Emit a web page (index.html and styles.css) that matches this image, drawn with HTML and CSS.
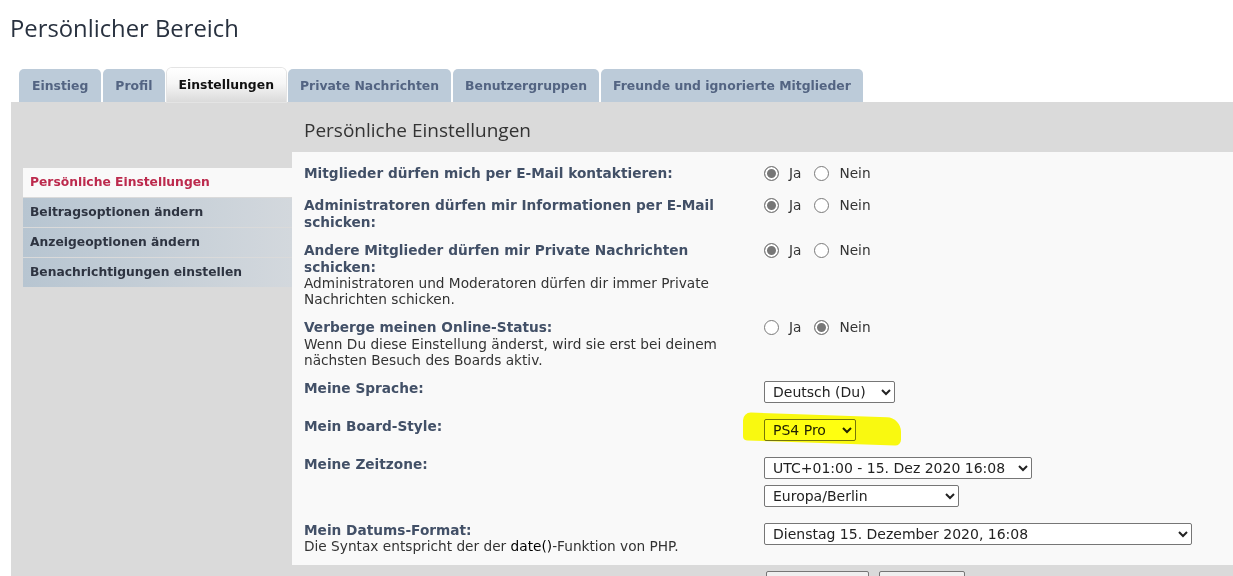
FILE: index.html
```html
<!DOCTYPE html>
<html lang="de">
<head>
    <meta charset="UTF-8">
    <title>Persönlicher Bereich</title>
    <link rel="stylesheet" href="styles.css">
</head>
<body>
    <h1 class="page-title">Persönlicher Bereich</h1>

    <ul class="tabs">
        <li class="tab">Einstieg</li>
        <li class="tab">Profil</li>
        <li class="tab active">Einstellungen</li>
        <li class="tab">Private Nachrichten</li>
        <li class="tab">Benutzergruppen</li>
        <li class="tab">Freunde und ignorierte Mitglieder</li>
    </ul>

    <div class="panel">
        <ul class="sidebar">
            <li class="side-item active">Persönliche Einstellungen</li>
            <li class="side-item">Beitragsoptionen ändern</li>
            <li class="side-item">Anzeigeoptionen ändern</li>
            <li class="side-item">Benachrichtigungen einstellen</li>
        </ul>

        <div class="main">
            <h2 class="main-head">Persönliche Einstellungen</h2>

            <div class="settings">
                <dl class="row">
                    <dt><label>Mitglieder dürfen mich per E-Mail kontaktieren:</label></dt>
                    <dd class="radios">
                        <label><input type="radio" name="email" checked> Ja</label>
                        <label><input type="radio" name="email"> Nein</label>
                    </dd>
                </dl>
                <dl class="row">
                    <dt><label>Administratoren dürfen mir Informationen per E-Mail schicken:</label></dt>
                    <dd class="radios">
                        <label><input type="radio" name="massemail" checked> Ja</label>
                        <label><input type="radio" name="massemail"> Nein</label>
                    </dd>
                </dl>
                <dl class="row">
                    <dt>
                        <label>Andere Mitglieder dürfen mir Private Nachrichten schicken:</label>
                        <span class="explain">Administratoren und Moderatoren dürfen dir immer Private Nachrichten schicken.</span>
                    </dt>
                    <dd class="radios">
                        <label><input type="radio" name="pm" checked> Ja</label>
                        <label><input type="radio" name="pm"> Nein</label>
                    </dd>
                </dl>
                <dl class="row">
                    <dt>
                        <label>Verberge meinen Online-Status:</label>
                        <span class="explain">Wenn Du diese Einstellung änderst, wird sie erst bei deinem nächsten Besuch des Boards aktiv.</span>
                    </dt>
                    <dd class="radios">
                        <label><input type="radio" name="hide"> Ja</label>
                        <label><input type="radio" name="hide" checked> Nein</label>
                    </dd>
                </dl>
                <dl class="row">
                    <dt><label>Meine Sprache:</label></dt>
                    <dd><select class="sel-lang"><option>Deutsch (Du)</option></select></dd>
                </dl>
                <dl class="row">
                    <dt><label>Mein Board-Style:</label></dt>
                    <dd class="marked">
                        <select class="sel-style"><option>PS4 Pro</option></select>
                        <span class="marker"></span>
                    </dd>
                </dl>
                <dl class="row">
                    <dt><label>Meine Zeitzone:</label></dt>
                    <dd class="stack">
                        <select class="sel-tz"><option>UTC+01:00 - 15. Dez 2020 16:08</option></select>
                        <select class="sel-city"><option>Europa/Berlin</option></select>
                    </dd>
                </dl>
                <dl class="row">
                    <dt>
                        <label>Mein Datums-Format:</label>
                        <span class="explain">Die Syntax entspricht der der <code>date()</code>-Funktion von PHP.</span>
                    </dt>
                    <dd><select class="sel-date"><option>Dienstag 15. Dezember 2020, 16:08</option></select></dd>
                </dl>
            </div>

            <div class="submit-row">
                <input type="reset" class="button reset" value="Zurücksetzen">
                <input type="submit" class="button submit" value="Absenden">
            </div>
        </div>
    </div>
</body>
</html>
```

FILE: styles.css
```css
:root {
    --panel: #dadada;
    --content: #f9f9f9;
    --tab: #bccbd9;
    --tab-text: #536482;
    --label: #425067;
    --text: #333;
}
html, body {
    overflow: hidden;
}
body {
    margin: 0;
    font-family: "DejaVu Sans", Verdana, sans-serif;
    font-size: 13.7px;
    color: var(--text);
    background: #fff;
}
ul {
    list-style: none;
    margin: 0;
    padding: 0;
}
.page-title {
    font-family: "Open Sans", "Trebuchet MS", sans-serif;
    font-weight: 400;
    font-size: 23.8px;
    color: #28313f;
    margin: 0;
    padding: 12px 0 0 10px;
    height: 56px;
    box-sizing: border-box;
}
.tabs {
    display: flex;
    align-items: flex-end;
    gap: 2px;
    padding-left: 19px;
    height: 46px;
}
.tab {
    height: 33px;
    line-height: 33px;
    padding: 0 12px;
    font-size: 12.4px;
    background: var(--tab);
    color: var(--tab-text);
    font-weight: bold;
    border-radius: 5px 5px 0 0;
}
.tab:first-child {
    padding: 0 13px;
}
.tab.active {
    height: 34px;
    line-height: 34px;
    background: linear-gradient(#fff 0%, #f6f6f6 45%, #dadada 100%);
    color: #111;
    box-shadow: 0 0 0 1px #e4e4e4;
}
.panel {
    display: flex;
    margin-left: 11px;
    background: var(--panel);
    min-height: 480px;
}
.sidebar {
    width: 269px;
    padding: 66px 0 0 12px;
    flex-shrink: 0;
}
.side-item {
    height: 29px;
    line-height: 29px;
    padding-left: 7px;
    margin-bottom: 1px;
    font-size: 12.3px;
    font-weight: bold;
    color: #2e3441;
    background: linear-gradient(to right, #b7c5d1, #d3d8dd);
}
.side-item.active {
    background: var(--content);
    color: #bc2a4d;
}
.main {
    flex: 1;
}
.main-head {
    font-family: "Open Sans", "Trebuchet MS", sans-serif;
    font-weight: 400;
    font-size: 19px;
    color: #333;
    margin: 0;
    height: 50px;
    line-height: 57px;
    padding-left: 12px;
}
.settings {
    background: var(--content);
    padding: 7px 12px 5px;
}
.row {
    display: flex;
    margin: 0;
    padding: 6px 0;
}
.row dt {
    width: 460px;
    flex-shrink: 0;
    line-height: 16.5px;
    padding-right: 10px;
    box-sizing: border-box;
}
.row dt label {
    font-weight: bold;
    color: var(--label);
}
.explain {
    display: block;
    line-height: 16px;
    color: var(--text);
}
code {
    font-family: inherit;
    color: #000;
}
.row dd {
    margin: 0;
}
.radios {
    display: flex;
    gap: 13px;
    height: 20px;
    align-items: flex-start;
}
.radios label {
    display: flex;
    align-items: center;
    gap: 10px;
    line-height: 17px;
}
input[type="radio"] {
    appearance: none;
    width: 15px;
    height: 15px;
    margin: 0;
    border: 1px solid #7a7a7a;
    border-radius: 50%;
    background: #fff;
    box-sizing: border-box;
}
input[type="radio"]:checked {
    background: #777;
    box-shadow: inset 0 0 0 2px #fff;
}
select {
    font-family: "DejaVu Sans", Verdana, sans-serif;
    font-size: 14px;
    color: #222;
    height: 22px;
    margin: 1px 0 3px;
    padding: 0 4px;
    border: 1px solid #767676;
    border-radius: 2px;
    background: #fff;
}
.sel-lang { width: 131px; }
.sel-style { width: 92px; }
.sel-tz { width: 268px; }
.sel-city { width: 195px; }
.sel-date { width: 428px; }
.stack {
    display: flex;
    flex-direction: column;
    align-items: flex-start;
}
.stack .sel-tz {
    margin-bottom: 5px;
}
.marked {
    position: relative;
}
.marker {
    position: absolute;
    left: -21px;
    top: -3px;
    width: 158px;
    height: 28px;
    background: #ffff10;
    border-radius: 8px 14px 6px 4px;
    transform: skewY(2deg);
    mix-blend-mode: multiply;
    pointer-events: none;
}
.submit-row {
    padding: 6px 0 0 474px;
    display: flex;
    gap: 10px;
}
.button {
    font-family: "DejaVu Sans", Verdana, sans-serif;
    font-size: 13px;
    height: 26px;
    padding: 0;
    border: 1px solid #767676;
    border-radius: 2px;
    background: #efefef;
}
.button.reset { width: 103px; }
.button.submit { width: 86px; }
```
